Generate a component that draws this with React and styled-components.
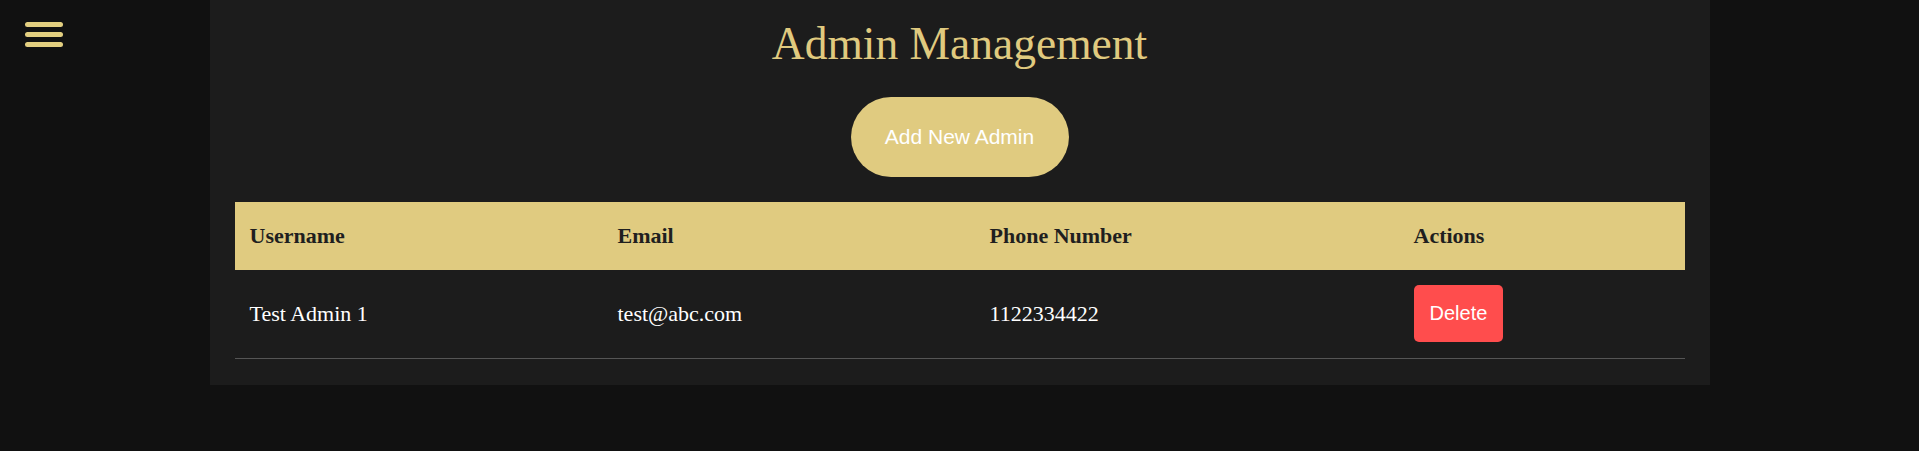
import React from 'react';
import styled, { createGlobalStyle } from 'styled-components';

const GlobalStyle = createGlobalStyle`
  html, body {
    margin: 0;
    padding: 0;
    background: #111111;
  }
  body {
    font-family: "Liberation Serif", serif;
  }
`;

const Page = styled.div`
  min-height: 451px;
  background: #111111;
`;

const MenuToggle = styled.button`
  position: absolute;
  top: 22px;
  left: 25px;
  width: 38px;
  padding: 0;
  border: none;
  background: transparent;
  display: flex;
  flex-direction: column;
  gap: 5px;
  cursor: pointer;

  span {
    display: block;
    height: 5px;
    border-radius: 3px;
    background: #e3cf80;
  }
`;

const Panel = styled.main`
  width: 1500px;
  margin: 0 auto;
  box-sizing: border-box;
  padding: 18px 25px 26px;
  background: #1c1c1c;
  display: flex;
  flex-direction: column;
  align-items: center;
`;

const Title = styled.h1`
  margin: 0;
  font-family: "Liberation Serif", serif;
  font-weight: normal;
  font-size: 45.5px;
  line-height: 52px;
  color: #e0ca7f;
`;

const AddButton = styled.button`
  margin-top: 27px;
  width: 218px;
  height: 80px;
  border: none;
  border-radius: 40px;
  background: #e0cb80;
  color: #ffffff;
  font-family: "Liberation Sans", sans-serif;
  font-size: 21px;
  cursor: pointer;
`;

const Table = styled.table`
  margin-top: 25px;
  width: 1450px;
  border-collapse: collapse;
`;

const HeadCell = styled.th`
  width: ${p => p.$w}px;
  height: 68px;
  padding: 0 15px;
  box-sizing: border-box;
  text-align: left;
  vertical-align: middle;
  background: #e0cb80;
  color: #1f1f1f;
  font-size: 22px;
  font-weight: bold;
`;

const Row = styled.tr`
  border-bottom: 1px solid #555555;
`;

const Cell = styled.td`
  height: 88px;
  padding: 0 15px;
  box-sizing: border-box;
  vertical-align: middle;
  color: #ffffff;
  font-size: 22px;
`;

const DeleteButton = styled.button`
  height: 57px;
  padding: 0 16px;
  border: none;
  border-radius: 5px;
  background: #ff4d4d;
  color: #ffffff;
  font-family: "Liberation Sans", sans-serif;
  font-size: 20px;
  cursor: pointer;
`;

const columns = [
  { label: 'Username', w: 368 },
  { label: 'Email', w: 372 },
  { label: 'Phone Number', w: 424 },
  { label: 'Actions', w: 286 },
];

const admins = [
  { id: 1, name: 'Test Admin 1', email: 'test@abc.com', phone: '1122334422' },
];

export default function App() {
  return (
    <Page>
      <GlobalStyle />
      <MenuToggle aria-label="menu">
        <span />
        <span />
        <span />
      </MenuToggle>
      <Panel>
        <Title>Admin Management</Title>
        <AddButton>Add New Admin</AddButton>
        <Table>
          <thead>
            <tr>
              {columns.map(c => (
                <HeadCell key={c.label} $w={c.w}>{c.label}</HeadCell>
              ))}
            </tr>
          </thead>
          <tbody>
            {admins.map(a => (
              <Row key={a.id}>
                <Cell>{a.name}</Cell>
                <Cell>{a.email}</Cell>
                <Cell>{a.phone}</Cell>
                <Cell>
                  <DeleteButton>Delete</DeleteButton>
                </Cell>
              </Row>
            ))}
          </tbody>
        </Table>
      </Panel>
    </Page>
  );
}
